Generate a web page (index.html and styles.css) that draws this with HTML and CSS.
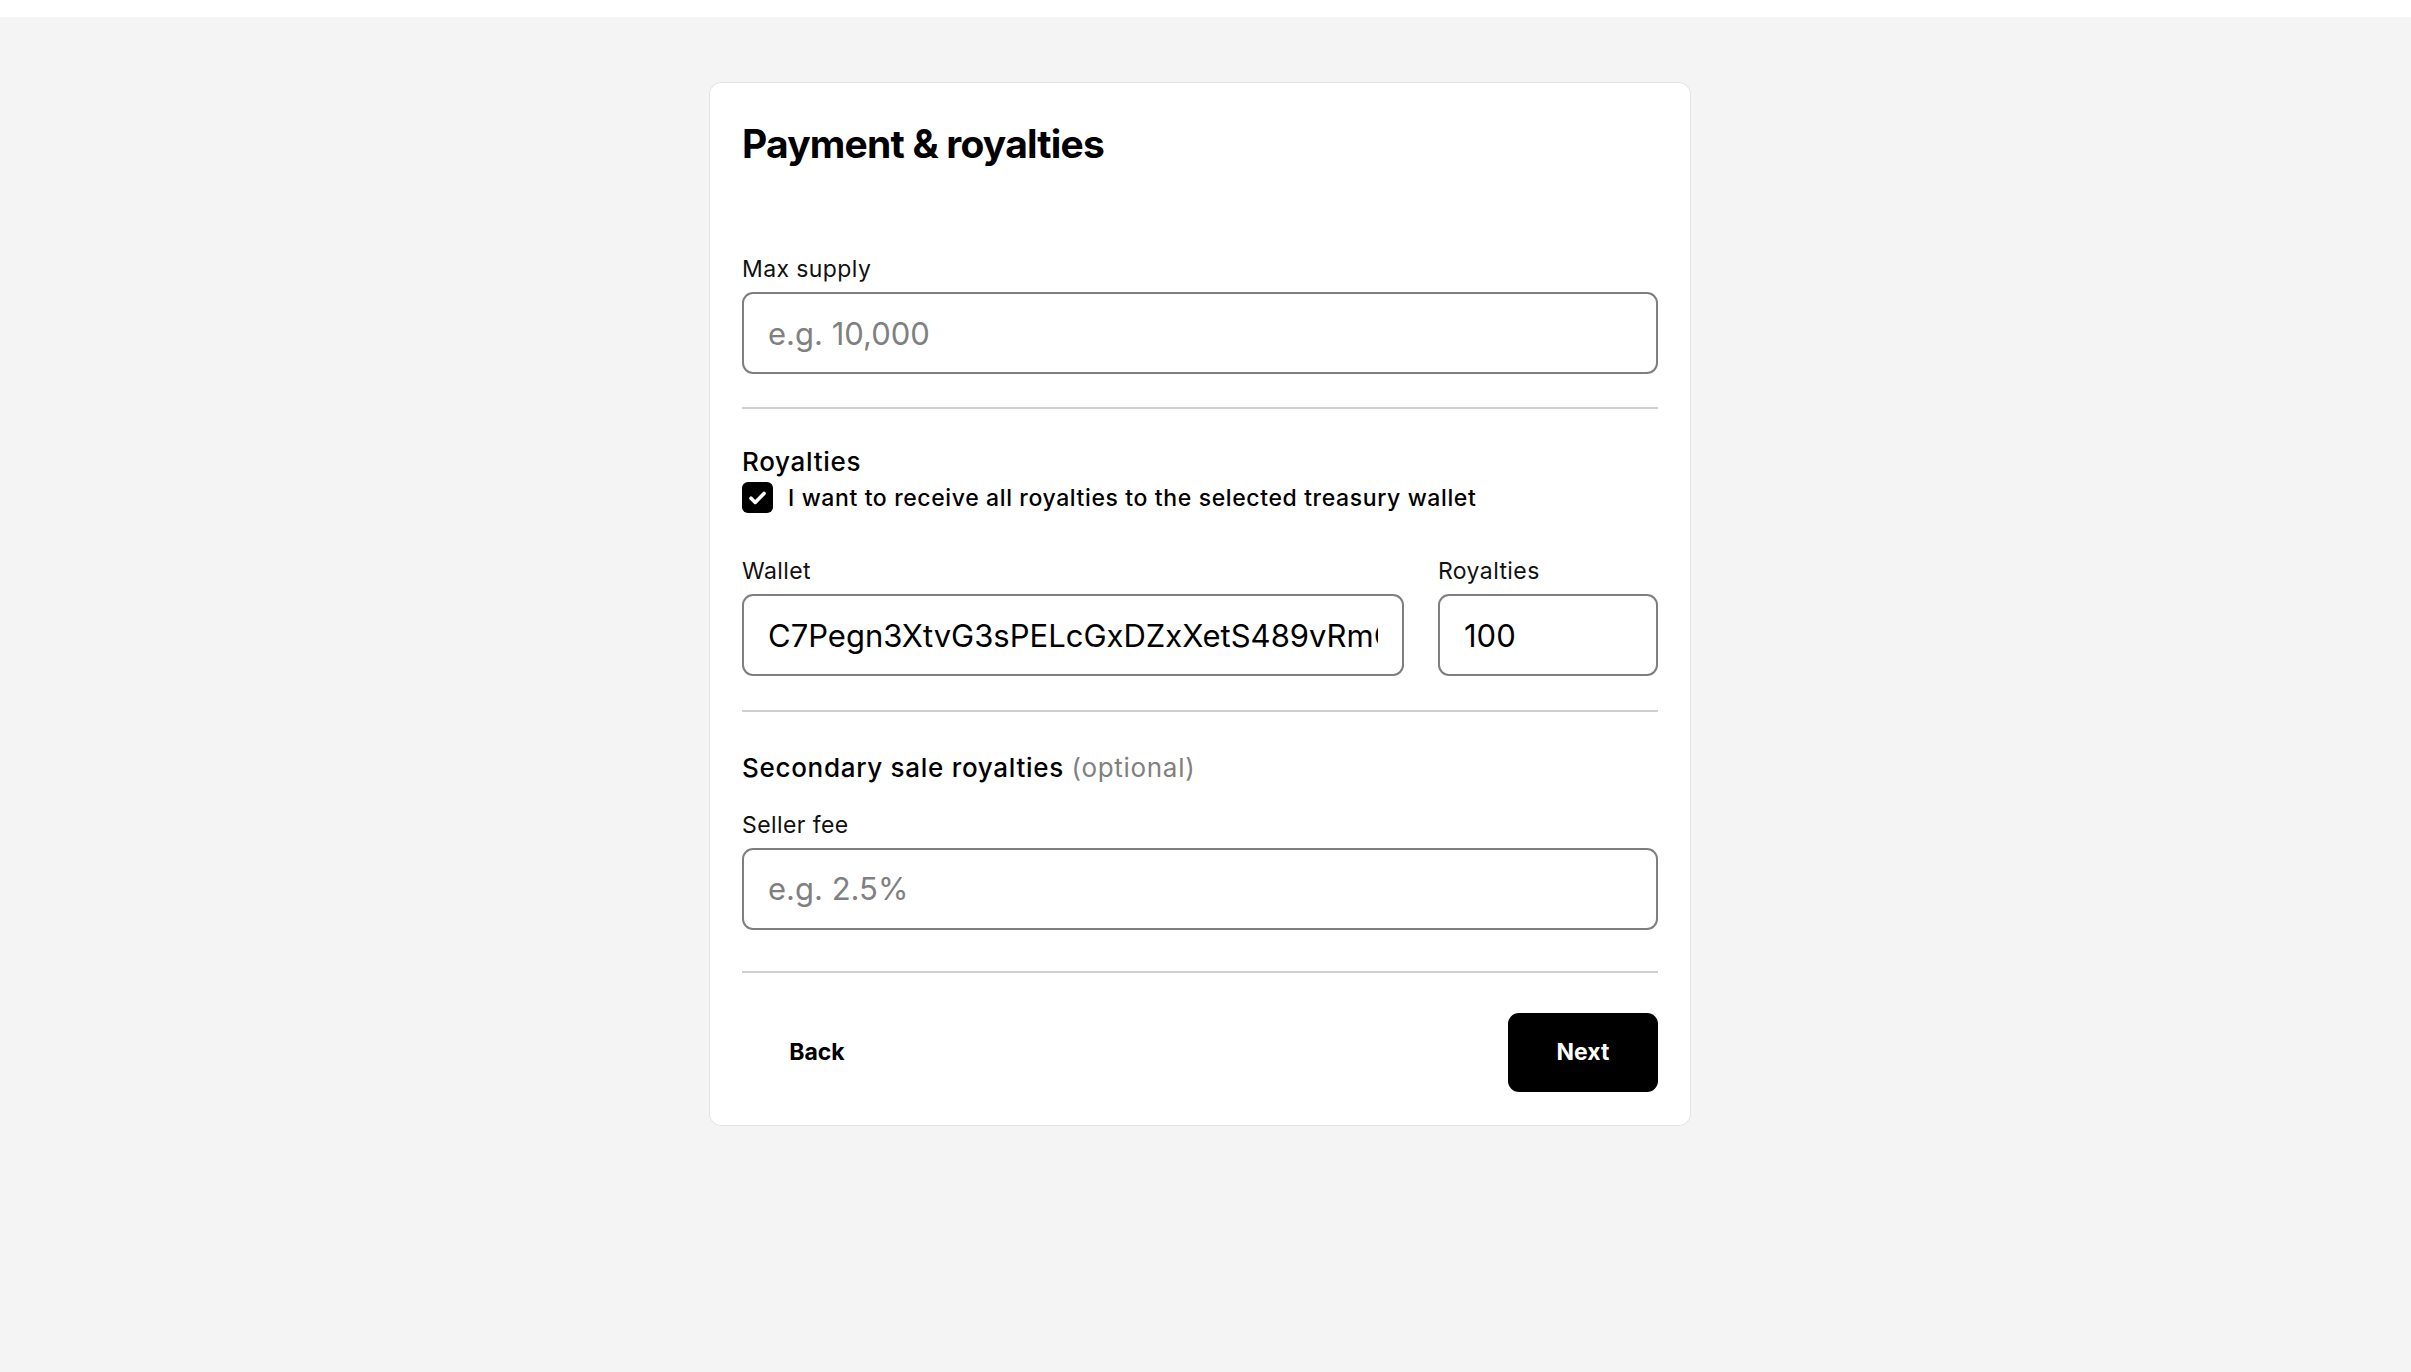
FILE: index.html
```html
<!DOCTYPE html>
<html lang="en">
<head>
<meta charset="utf-8">
<title>Payment &amp; royalties</title>
<link rel="stylesheet" href="styles.css">
</head>
<body>
<div class="topbar"></div>
<main class="page">
  <section class="card">
    <h1 class="title">Payment &amp; royalties</h1>

    <div class="field">
      <label class="label" for="max-supply">Max supply</label>
      <input class="input" id="max-supply" type="text" placeholder="e.g. 10,000">
    </div>

    <hr class="divider divider-first">

    <h2 class="subtitle">Royalties</h2>
    <label class="check-row">
      <span class="checkbox">
        <svg viewBox="0 0 31 31" width="31" height="31" aria-hidden="true"><path d="M9 16.2l4.2 4.2 8.8-9" fill="none" stroke="#fff" stroke-width="3.6" stroke-linecap="round" stroke-linejoin="round"/></svg>
      </span>
      <span class="check-text">I want to receive all royalties to the selected treasury wallet</span>
    </label>

    <div class="row-two">
      <div class="field">
        <label class="label" for="wallet">Wallet</label>
        <input class="input" id="wallet" type="text" value="C7Pegn3XtvG3sPELcGxDZxXetS489vRmCQ4u8ZkH2dWa">
      </div>
      <div class="field">
        <label class="label" for="royalties">Royalties</label>
        <input class="input" id="royalties" type="text" value="100">
      </div>
    </div>

    <hr class="divider divider-second">

    <h2 class="subtitle subtitle-secondary">Secondary sale royalties <span class="optional">(optional)</span></h2>

    <div class="field">
      <label class="label" for="seller-fee">Seller fee</label>
      <input class="input" id="seller-fee" type="text" placeholder="e.g. 2.5%">
    </div>

    <hr class="divider divider-third">

    <div class="actions">
      <button class="btn btn-ghost" type="button">Back</button>
      <button class="btn btn-primary" type="button">Next</button>
    </div>
  </section>
</main>
</body>
</html>
```

FILE: styles.css
```css
* {
  box-sizing: border-box;
}

html, body {
  margin: 0;
  padding: 0;
}

body {
  background: #f4f4f4;
  font-family: Inter, "Noto Sans", "Liberation Sans", sans-serif;
  color: #000;
  min-height: 1372px;
}

.topbar {
  height: 17px;
  background: #ffffff;
}

.page {
  display: flex;
  justify-content: center;
  padding: 65px 11px 0 0;
}

.card {
  width: 982px;
  background: #ffffff;
  border: 1px solid #e3e3e3;
  border-radius: 12px;
  padding: 37px 32px 33px;
}

.title {
  margin: 0 0 86px;
  font-size: 39px;
  line-height: 48px;
  font-weight: 700;
  letter-spacing: -0.8px;
  color: #000;
}

.field {
  display: flex;
  flex-direction: column;
}

.label {
  display: block;
  font-size: 23px;
  line-height: 30px;
  font-weight: 400;
  letter-spacing: 0.4px;
  color: #111;
  margin-bottom: 8px;
}

.input {
  width: 100%;
  height: 82px;
  border: 2px solid #7f7f7f;
  border-radius: 11px;
  padding: 0 24px;
  font-family: inherit;
  font-size: 31px;
  color: #000;
  background: #fff;
  outline: none;
}

.input::placeholder {
  color: #808080;
  opacity: 1;
}

.divider {
  border: 0;
  height: 2px;
  background: #cfcfcf;
  margin: 0;
}

.divider-first {
  margin: 33px 0 38px;
}

.divider-second {
  margin: 34px 0 41px;
}

.divider-third {
  margin: 41px 0 40px;
}

.subtitle {
  margin: 0;
  font-size: 26px;
  line-height: 30px;
  font-weight: 500;
  letter-spacing: 0.7px;
  color: #000;
}

.subtitle-secondary {
  margin-bottom: 26.5px;
}

.optional {
  color: #808080;
  font-weight: 400;
}

.check-row {
  display: flex;
  align-items: center;
  gap: 15px;
  margin-top: 5px;
  height: 31px;
}

.checkbox {
  width: 31px;
  height: 31px;
  border-radius: 6px;
  background: #000;
  display: flex;
  align-items: center;
  justify-content: center;
  flex: none;
}

.check-text {
  font-size: 23px;
  font-weight: 500;
  letter-spacing: 0.62px;
  color: #000;
}

.row-two {
  display: grid;
  grid-template-columns: 1fr 220px;
  gap: 34px;
  margin-top: 43px;
}

.actions {
  display: flex;
  justify-content: space-between;
  align-items: center;
}

.btn {
  width: 150px;
  height: 79px;
  border: 0;
  border-radius: 11px;
  font-family: inherit;
  font-size: 23px;
  font-weight: 700;
  cursor: pointer;
}

.btn-ghost {
  background: transparent;
  color: #000;
}

.btn-primary {
  background: #000;
  color: #fff;
}
```
